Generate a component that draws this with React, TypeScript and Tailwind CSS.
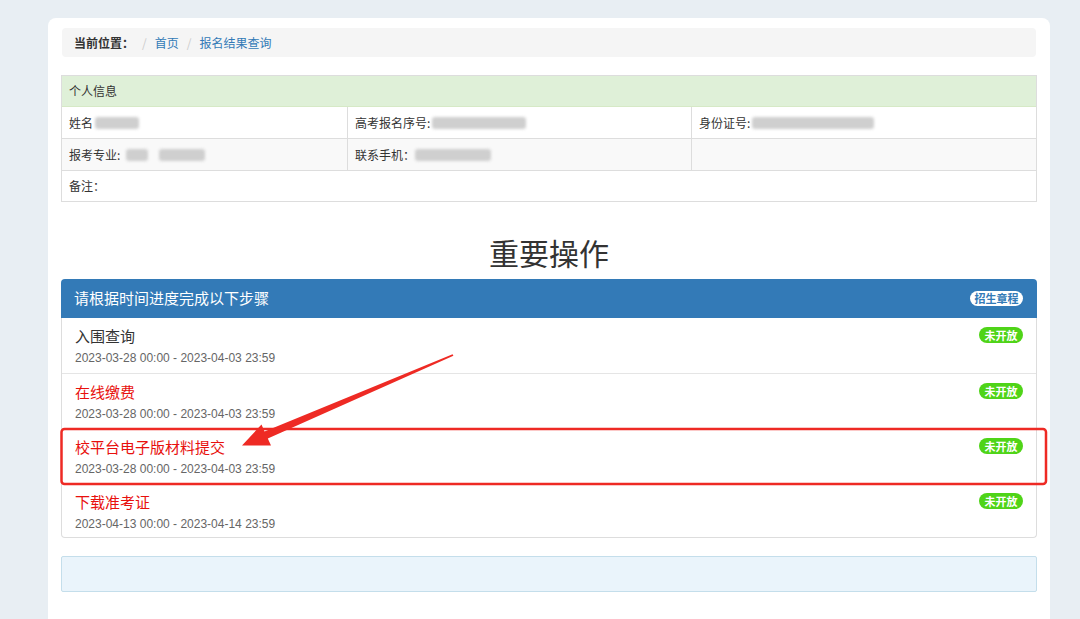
import React from 'react';

const steps = [
  { title: '入围查询', time: '2023-03-28 00:00 - 2023-04-03 23:59', red: false },
  { title: '在线缴费', time: '2023-03-28 00:00 - 2023-04-03 23:59', red: true },
  { title: '校平台电子版材料提交', time: '2023-03-28 00:00 - 2023-04-03 23:59', red: true },
  { title: '下载准考证', time: '2023-04-13 00:00 - 2023-04-14 23:59', red: true },
];

const Blur = ({ w, className = '' }: { w: number; className?: string }) => (
  <span
    className={`inline-block h-[12px] align-middle rounded-[3px] bg-[#cfcfcf] blur-[1.5px] ${className}`}
    style={{ width: w }}
  />
);

export default function App() {
  return (
    <div className="relative h-[619px] overflow-hidden bg-[#e8eef3] pt-[18px] font-['Noto_Sans_CJK_SC',sans-serif] text-[#333]">
      <div className="ml-[48px] mr-[30px] h-[640px] rounded-t-[8px] bg-white px-[13px] pt-[10px]">
        {/* breadcrumb */}
        <div className="mx-px flex h-[29px] items-center gap-[8px] rounded-[4px] bg-[#f5f5f5] px-[12px] text-[12px]">
          <span className="font-bold text-[#333]">当前位置：</span>
          <span className="text-[#ccc]">/</span>
          <span className="text-[#337ab7]">首页</span>
          <span className="text-[#ccc]">/</span>
          <span className="text-[#337ab7]">报名结果查询</span>
        </div>

        {/* personal info */}
        <div className="mt-[18px] border border-[#dddddd] text-[12px]">
          <div className="flex h-[31px] items-center border-b border-[#d6e9c6] bg-[#dff0d8] px-[7px]">个人信息</div>
          <div className="grid h-[32px] grid-cols-[285px_344px_1fr] border-b border-[#dddddd]">
            <div className="flex items-center px-[7px]">姓名<Blur w={44} className="ml-[2px]" /></div>
            <div className="flex items-center border-l border-[#dddddd] px-[7px]">高考报名序号:<Blur w={94} className="ml-[2px]" /></div>
            <div className="flex items-center border-l border-[#dddddd] px-[7px]">身份证号:<Blur w={122} className="ml-[2px]" /></div>
          </div>
          <div className="grid h-[32px] grid-cols-[285px_344px_1fr] border-b border-[#dddddd] bg-[#f9f9f9]">
            <div className="flex items-center px-[7px]">报考专业:<Blur w={22} className="ml-[6px]" /><Blur w={46} className="ml-[11px]" /></div>
            <div className="flex items-center border-l border-[#dddddd] px-[7px]">联系手机：<Blur w={76} /></div>
            <div className="border-l border-[#dddddd]" />
          </div>
          <div className="flex h-[30px] items-center px-[7px]">备注：</div>
        </div>

        <h1 className="mt-[32px] mb-[9px] text-center text-[30px] leading-[36px] text-[#333]">重要操作</h1>

        {/* steps */}
        <div>
          <div className="flex h-[39px] items-center justify-between rounded-t-[4px] bg-[#337ab7] pl-[13px] pr-[14px] text-[15px] text-white">
            <span>请根据时间进度完成以下步骤</span>
            <span className="flex h-[15px] w-[53px] items-center justify-center rounded-full bg-white text-[11px] font-bold text-[#337ab7]">招生章程</span>
          </div>
          <div className="rounded-b-[4px] border-x border-b border-[#dddddd]">
            {steps.map((s, i) => (
              <div
                key={s.title}
                className={`flex justify-between pl-[13px] pr-[13px] ${i > 0 ? 'border-t border-[#e5e5e5]' : ''} ${i === steps.length - 1 ? 'h-[54px]' : 'h-[55px]'}`}
              >
                <div className="pt-[8px]">
                  <div className={`text-[15px] leading-[20px] ${s.red ? 'text-[#e8100d]' : 'text-[#333]'}`}>{s.title}</div>
                  <div className="mt-[3px] font-['Liberation_Sans',sans-serif] text-[12px] leading-[18px] text-[#666]">{s.time}</div>
                </div>
                <span className="mt-[9px] flex h-[16px] w-[44px] items-center justify-center rounded-full bg-[#4fd418] text-[11px] font-bold text-white">未开放</span>
              </div>
            ))}
          </div>
        </div>

        <div className="mt-[18px] h-[36px] rounded-[2px] border border-[#c4deeb] bg-[#eaf4fb]" />
      </div>

      {/* annotation overlay */}
      <svg className="pointer-events-none absolute left-0 top-0" width="1080" height="619">
        <rect x="61.5" y="429" width="984.5" height="55" rx="3" fill="none" stroke="#ee2a24" strokeWidth="2.5" />
        <polygon
          points="452.6,354.2 264.5,431.6 261.5,424.5 242,445.5 271,445.5 267.8,438.6 453.4,355.8"
          fill="#ee2a24"
        />
      </svg>
    </div>
  );
}
